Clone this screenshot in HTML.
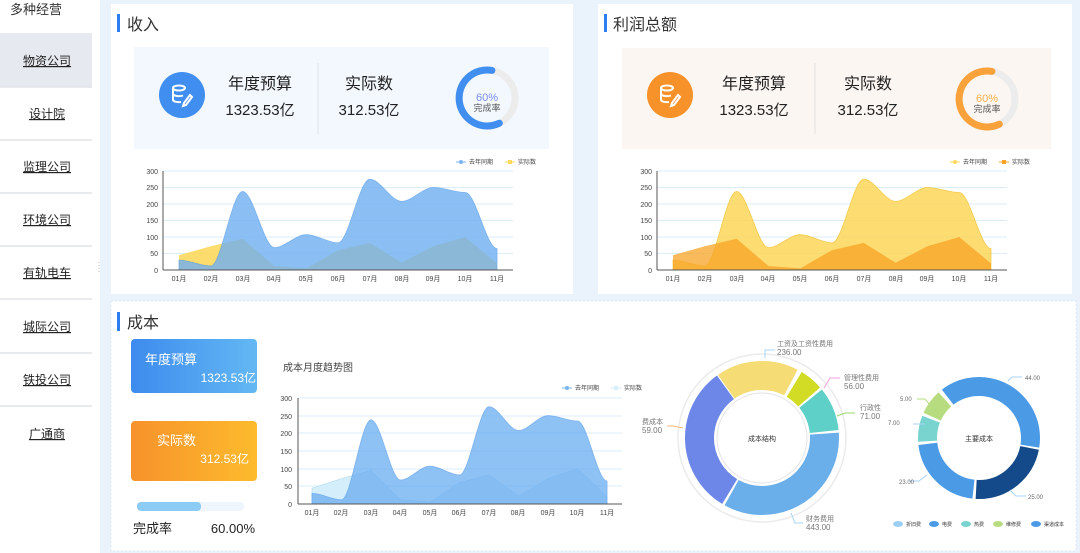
<!DOCTYPE html>
<html><head><meta charset="utf-8">
<style>
body{margin:0;width:1080px;height:553px;overflow:hidden;background:#eaf2fb;font-family:"Liberation Sans","Noto Sans CJK SC",sans-serif;}
svg text{font-family:"Liberation Sans","Noto Sans CJK SC",sans-serif;}
</style></head><body>
<svg width="1080" height="553" viewBox="0 0 1080 553" xmlns="http://www.w3.org/2000/svg" style="position:absolute;left:0;top:0">
<!-- sidebar -->
<rect x="0" y="0" width="100" height="553" fill="#fff"/>
<text x="10" y="14" font-size="13" fill="#333">多种经营</text>
<rect x="0" y="33" width="92" height="54" fill="#e6e9ef"/>
<g stroke="#e2e4e8" stroke-width="1.5">
<line x1="0" y1="87" x2="92" y2="87"/><line x1="0" y1="140" x2="92" y2="140"/><line x1="0" y1="193" x2="92" y2="193"/><line x1="0" y1="246" x2="92" y2="246"/><line x1="0" y1="299" x2="92" y2="299"/><line x1="0" y1="353" x2="92" y2="353"/><line x1="0" y1="406" x2="92" y2="406"/>
</g>
<g font-size="12" fill="#222" text-anchor="middle" text-decoration="underline">
<text x="47" y="65">物资公司</text><text x="47" y="118">设计院</text><text x="47" y="171">监理公司</text><text x="47" y="224">环境公司</text><text x="47" y="277">有轨电车</text><text x="47" y="331">城际公司</text><text x="47" y="384">铁投公司</text><text x="47" y="438">广通商</text>
</g>
<line x1="99" y1="262" x2="99" y2="274" stroke="#bbb" stroke-dasharray="1 2"/>

<!-- panels -->
<rect x="111" y="4" width="462" height="290" fill="#fff"/>
<rect x="598" y="4" width="474" height="290" fill="#fff"/>
<rect x="111" y="301" width="965" height="250" fill="#fff" stroke="#dde9f5" stroke-dasharray="2 2"/>

<!-- revenue -->
<rect x="117" y="14" width="3" height="18" fill="#2d7cf0"/>
<text x="127" y="30" font-size="16" fill="#333">收入</text>
<rect x="134" y="47" width="415" height="102" fill="#f3f8fe"/>
<circle cx="182" cy="95" r="23" fill="#3f8ef0"/>
<g fill="none" stroke="#fff" stroke-width="2"><ellipse cx="179" cy="88" rx="6" ry="2.5"/><path d="M173,88 v12 a6,2.5 0 0 0 8,2 M173,94 a6,2.5 0 0 0 10,1.5"/><path d="M184,103 l6,-8 l2,2 l-6,8 l-3,1z"/></g>
<g text-anchor="middle" fill="#222"><text x="260" y="89" font-size="16">年度预算</text><text x="260" y="115" font-size="15">1323.53亿</text><text x="369" y="89" font-size="16">实际数</text><text x="369" y="115" font-size="15">312.53亿</text></g>
<line x1="318" y1="63" x2="318" y2="134" stroke="#dde3ea"/>
<circle cx="487" cy="98" r="28" fill="none" stroke="#ececec" stroke-width="7"/>
<path d="M491.9,70.4 A28,28 0 1 0 499.3,123.2" fill="none" stroke="#3f8ef0" stroke-width="7" stroke-linecap="round"/>
<text x="487" y="101" font-size="11" fill="#7a8ef0" text-anchor="middle">60%</text>
<text x="487" y="111" font-size="9" fill="#555" text-anchor="middle">完成率</text>

<!-- chart1 -->
<g stroke="#dbeef8"><line x1="163" y1="171" x2="513" y2="171"/><line x1="163" y1="187.5" x2="513" y2="187.5"/><line x1="163" y1="204" x2="513" y2="204"/><line x1="163" y1="220.5" x2="513" y2="220.5"/><line x1="163" y1="237" x2="513" y2="237"/><line x1="163" y1="253.5" x2="513" y2="253.5"/></g>
<g font-size="7" fill="#444" text-anchor="end"><text x="158" y="174">300</text><text x="158" y="190">250</text><text x="158" y="207">200</text><text x="158" y="223">150</text><text x="158" y="240">100</text><text x="158" y="256">50</text><text x="158" y="273">0</text></g>
<path d="M179,255.2 L210.8,246.2 L242.6,238.7 L274.4,266 L306.2,268.4 L338,250.2 L369.8,242.9 L401.6,262.7 L433.4,246.2 L465.2,237 L497,263.4 L497,270 L179,270Z" fill="#fcd85c" opacity="0.9"/>
<path d="M179,260.1 C189.6,260.1 200.2,266 210.8,266 C221.4,266 232,191.5 242.6,191.5 C253.2,191.5 263.8,247.6 274.4,247.6 C285,247.6 295.6,234.7 306.2,234.7 C316.8,234.7 327.4,242.9 338,242.9 C348.6,242.9 359.2,179.3 369.8,179.3 C380.4,179.3 391,201.4 401.6,201.4 C412.2,201.4 422.8,187.5 433.4,187.5 C444,187.5 454.6,192.5 465.2,192.5 C475.8,192.5 486.4,248.6 497,248.6 L497,270 L179,270 Z" fill="#6fb0f2" opacity="0.8" stroke="#5a9eea" stroke-width="0.8"/>
<line x1="163" y1="171" x2="163" y2="270" stroke="#555"/><line x1="163" y1="270" x2="513" y2="270" stroke="#555"/>
<g font-size="7" fill="#444" text-anchor="middle"><text x="179" y="281">01月</text><text x="211" y="281">02月</text><text x="243" y="281">03月</text><text x="274" y="281">04月</text><text x="306" y="281">05月</text><text x="338" y="281">06月</text><text x="370" y="281">07月</text><text x="402" y="281">08月</text><text x="433" y="281">09月</text><text x="465" y="281">10月</text><text x="497" y="281">11月</text></g>
<g font-size="6" fill="#444"><line x1="456" y1="162" x2="466" y2="162" stroke="#7ab5f0"/><circle cx="461" cy="162" r="2" fill="#7ab5f0"/><text x="469" y="164">去年同期</text><line x1="505" y1="162" x2="515" y2="162" stroke="#fcd85c"/><rect x="508" y="160" width="4" height="4" fill="#fcd85c"/><text x="518" y="164">实际数</text></g>

<!-- profit -->
<rect x="604" y="14" width="3" height="18" fill="#2d7cf0"/>
<text x="613" y="30" font-size="16" fill="#333">利润总额</text>
<rect x="622" y="48" width="429" height="101" fill="#fbf6f2"/>
<circle cx="670" cy="95" r="23" fill="#f7922a"/>
<g fill="none" stroke="#fff" stroke-width="2"><ellipse cx="667" cy="88" rx="6" ry="2.5"/><path d="M661,88 v12 a6,2.5 0 0 0 8,2 M661,94 a6,2.5 0 0 0 10,1.5"/><path d="M672,103 l6,-8 l2,2 l-6,8 l-3,1z"/></g>
<g text-anchor="middle" fill="#222"><text x="754" y="89" font-size="16">年度预算</text><text x="754" y="115" font-size="15">1323.53亿</text><text x="868" y="89" font-size="16">实际数</text><text x="868" y="115" font-size="15">312.53亿</text></g>
<line x1="815" y1="63" x2="815" y2="134" stroke="#e3e3e3"/>
<circle cx="987" cy="99" r="28" fill="none" stroke="#ececec" stroke-width="7"/>
<path d="M991.9,71.4 A28,28 0 1 0 999.3,124.2" fill="none" stroke="#f9a23b" stroke-width="7" stroke-linecap="round"/>
<text x="987" y="102" font-size="11" fill="#f9b04d" text-anchor="middle">60%</text>
<text x="987" y="112" font-size="9" fill="#555" text-anchor="middle">完成率</text>
<g transform="translate(494,0)">
<g stroke="#dbeef8"><line x1="163" y1="171" x2="513" y2="171"/><line x1="163" y1="187.5" x2="513" y2="187.5"/><line x1="163" y1="204" x2="513" y2="204"/><line x1="163" y1="220.5" x2="513" y2="220.5"/><line x1="163" y1="237" x2="513" y2="237"/><line x1="163" y1="253.5" x2="513" y2="253.5"/></g>
<g font-size="7" fill="#444" text-anchor="end"><text x="158" y="174">300</text><text x="158" y="190">250</text><text x="158" y="207">200</text><text x="158" y="223">150</text><text x="158" y="240">100</text><text x="158" y="256">50</text><text x="158" y="273">0</text></g>
<path d="M179,260.1 C189.6,260.1 200.2,266 210.8,266 C221.4,266 232,191.5 242.6,191.5 C253.2,191.5 263.8,247.6 274.4,247.6 C285,247.6 295.6,234.7 306.2,234.7 C316.8,234.7 327.4,242.9 338,242.9 C348.6,242.9 359.2,179.3 369.8,179.3 C380.4,179.3 391,201.4 401.6,201.4 C412.2,201.4 422.8,187.5 433.4,187.5 C444,187.5 454.6,192.5 465.2,192.5 C475.8,192.5 486.4,248.6 497,248.6 L497,270 L179,270 Z" fill="#fdd65a" opacity="0.85" stroke="#f2c230" stroke-width="0.8"/>
<path d="M179,255.2 L210.8,246.2 L242.6,238.7 L274.4,266 L306.2,268.4 L338,250.2 L369.8,242.9 L401.6,262.7 L433.4,246.2 L465.2,237 L497,263.4 L497,270 L179,270Z" fill="#f7a326" opacity="0.75"/>
<line x1="163" y1="171" x2="163" y2="270" stroke="#555"/><line x1="163" y1="270" x2="513" y2="270" stroke="#555"/>
<g font-size="7" fill="#444" text-anchor="middle"><text x="179" y="281">01月</text><text x="211" y="281">02月</text><text x="243" y="281">03月</text><text x="274" y="281">04月</text><text x="306" y="281">05月</text><text x="338" y="281">06月</text><text x="370" y="281">07月</text><text x="402" y="281">08月</text><text x="433" y="281">09月</text><text x="465" y="281">10月</text><text x="497" y="281">11月</text></g>
<g font-size="6" fill="#444"><line x1="456" y1="162" x2="466" y2="162" stroke="#fcd85c"/><circle cx="461" cy="162" r="2" fill="#fcd85c"/><text x="469" y="164">去年同期</text><line x1="505" y1="162" x2="515" y2="162" stroke="#f7a326"/><rect x="508" y="160" width="4" height="4" fill="#f7a326"/><text x="518" y="164">实际数</text></g>
</g>

<!-- cost -->
<rect x="117" y="312" width="3" height="19" fill="#2d7cf0"/>
<text x="127" y="328" font-size="16" fill="#333">成本</text>
<defs>
<linearGradient id="gb" x1="0" x2="1"><stop offset="0" stop-color="#3d8bee"/><stop offset="1" stop-color="#63b8f3"/></linearGradient>
<linearGradient id="go" x1="0" x2="1"><stop offset="0" stop-color="#f7922c"/><stop offset="1" stop-color="#fdbb2d"/></linearGradient>
</defs>
<rect x="131" y="339" width="126" height="54" rx="4" fill="url(#gb)"/>
<text x="145" y="364" font-size="13" fill="#fff">年度预算</text>
<text x="256" y="382" font-size="12" fill="#fff" text-anchor="end">1323.53亿</text>
<rect x="131" y="421" width="126" height="60" rx="4" fill="url(#go)"/>
<text x="157" y="445" font-size="13" fill="#fff">实际数</text>
<text x="249" y="463" font-size="12" fill="#fff" text-anchor="end">312.53亿</text>
<rect x="137" y="502" width="107" height="9" rx="4" fill="#eef5fd"/>
<rect x="137" y="502" width="64" height="9" rx="4" fill="#8ccbf3"/>
<text x="133" y="533" font-size="13" fill="#222">完成率</text>
<text x="255" y="533" font-size="13" fill="#222" text-anchor="end">60.00%</text>
<text x="283" y="371" font-size="10" fill="#444">成本月度趋势图</text>
<g stroke="#dbeef8"><line x1="298" y1="398" x2="622" y2="398"/><line x1="298" y1="416" x2="622" y2="416"/><line x1="298" y1="433" x2="622" y2="433"/><line x1="298" y1="451" x2="622" y2="451"/><line x1="298" y1="469" x2="622" y2="469"/><line x1="298" y1="486" x2="622" y2="486"/></g>
<g font-size="7" fill="#444" text-anchor="end"><text x="292" y="401">300</text><text x="292" y="419">250</text><text x="292" y="436">200</text><text x="292" y="454">150</text><text x="292" y="472">100</text><text x="292" y="489">50</text><text x="292" y="507">0</text></g>
<path d="M312,488.1 L341.5,478.6 L371,470.4 L400.5,499.8 L430,502.2 L459.5,482.8 L489,475 L518.5,496.2 L548,478.6 L577.5,468.7 L607,496.9 L607,504 L312,504Z" fill="#d5eefb" stroke="#a9d8f3" stroke-width="0.6"/>
<path d="M312,493.4 C321.8,493.4 331.7,499.8 341.5,499.8 C351.3,499.8 361.2,419.9 371,419.9 C380.8,419.9 390.7,480 400.5,480 C410.3,480 420.2,466.2 430,466.2 C439.8,466.2 449.7,475 459.5,475 C469.3,475 479.2,406.8 489,406.8 C498.8,406.8 508.7,430.5 518.5,430.5 C528.3,430.5 538.2,415.7 548,415.7 C557.8,415.7 567.7,421 577.5,421 C587.3,421 597.2,481 607,481 L607,504 L312,504Z" fill="#6fb0f2" opacity="0.78" stroke="#5a9eea" stroke-width="0.8"/>
<line x1="298" y1="398" x2="298" y2="504" stroke="#555"/><line x1="298" y1="504" x2="622" y2="504" stroke="#555"/>
<g font-size="7" fill="#444" text-anchor="middle"><text x="312" y="515">01月</text><text x="341" y="515">02月</text><text x="371" y="515">03月</text><text x="400" y="515">04月</text><text x="430" y="515">05月</text><text x="459" y="515">06月</text><text x="489" y="515">07月</text><text x="518" y="515">08月</text><text x="548" y="515">09月</text><text x="577" y="515">10月</text><text x="607" y="515">11月</text></g>
<g font-size="6" fill="#444"><line x1="562" y1="388" x2="572" y2="388" stroke="#7ab5f0"/><circle cx="567" cy="388" r="2" fill="#7ab5f0"/><text x="575" y="390">去年同期</text><line x1="611" y1="388" x2="621" y2="388" stroke="#d5eefb"/><rect x="614" y="386" width="4" height="4" fill="#d5eefb"/><text x="624" y="390">实际数</text></g>

<!-- big donut -->
<circle cx="762" cy="438" r="84" fill="none" stroke="#ebebeb" stroke-width="1.5"/>
<circle cx="762" cy="438" r="45" fill="none" stroke="#e4e4e4" stroke-width="1"/>
<g transform="rotate(-90 762 438)" fill="none" stroke-width="29">
<circle cx="762" cy="438" r="62.5" stroke="#f5dc74" stroke-dasharray="68.7 400" stroke-dashoffset="-354.5"/>
<circle cx="762" cy="438" r="62.5" stroke="#f5dc74" stroke-dasharray="30 400" stroke-dashoffset="0"/>
<circle cx="762" cy="438" r="62.5" stroke="#d2dc24" stroke-dasharray="19.6 400" stroke-dashoffset="-33.8"/>
<circle cx="762" cy="438" r="62.5" stroke="#5fd0c8" stroke-dasharray="36 400" stroke-dashoffset="-55.6"/>
<circle cx="762" cy="438" r="62.5" stroke="#6aaeea" stroke-dasharray="134.2 400" stroke-dashoffset="-93.8"/>
<circle cx="762" cy="438" r="62.5" stroke="#6d87e8" stroke-dasharray="123.3 400" stroke-dashoffset="-230.2"/>
</g>
<text x="762" y="441" font-size="7" fill="#333" text-anchor="middle">成本结构</text>
<g font-size="7" fill="#777">
<path d="M765,358 v-8 h10" stroke="#a8d4f5" fill="none"/><text x="777" y="346">工资及工资性费用</text><text x="777" y="355" font-size="8">236.00</text>
<path d="M824,388 l6,-10 h10" stroke="#f0a0e0" fill="none"/><text x="844" y="380">管理性费用</text><text x="844" y="389" font-size="8">56.00</text>
<path d="M837,416 l8,-3 h10" stroke="#9ad86a" fill="none"/><text x="860" y="410">行政性</text><text x="860" y="419" font-size="8">71.00</text>
<path d="M683,428 l-10,-2 h-6" stroke="#f5b87a" fill="none"/><text x="642" y="424">费成本</text><text x="642" y="433" font-size="8">59.00</text>
<path d="M791,513 l4,10 h8" stroke="#a8d4f5" fill="none"/><text x="806" y="521">财务费用</text><text x="806" y="530" font-size="8">443.00</text>
</g>

<!-- small donut -->
<g transform="rotate(-90 979 438)" fill="none" stroke-width="19">
<circle cx="979" cy="438" r="51.5" stroke="#4a9ae6" stroke-dasharray="122.3 400" stroke-dashoffset="-289.5"/>
<circle cx="979" cy="438" r="51.5" stroke="#4a9ae6" stroke-dasharray="89 400" stroke-dashoffset="0"/>
<circle cx="979" cy="438" r="51.5" stroke="#144a8a" stroke-dasharray="73.7 400" stroke-dashoffset="-90.8"/>
<circle cx="979" cy="438" r="51.5" stroke="#4a9ae6" stroke-dasharray="69.2 400" stroke-dashoffset="-167.2"/>
<circle cx="979" cy="438" r="51.5" stroke="#79d3cf" stroke-dasharray="22.5 400" stroke-dashoffset="-239.1"/>
<circle cx="979" cy="438" r="51.5" stroke="#b7dc7f" stroke-dasharray="21.6 400" stroke-dashoffset="-264.3"/>
</g>
<text x="979" y="441" font-size="7" fill="#333" text-anchor="middle">主要成本</text>
<g font-size="6" fill="#555" fill-opacity="0.9">
<path d="M1008,381 l4,-4 h10" stroke="#a8d4f5" fill="none"/><text x="1025" y="380">44.00</text>
<path d="M930,405 l-5,-6 h-8" stroke="#b7dc7f" fill="none"/><text x="900" y="401">5.00</text>
<path d="M925,424 h-12" stroke="#a8d4f5" fill="none"/><text x="888" y="425">7.00</text>
<path d="M927,475 l-8,6 h-10" stroke="#a8d4f5" fill="none"/><text x="899" y="484">23.00</text>
<path d="M1010,490 l6,6 h10" stroke="#a8d4f5" fill="none"/><text x="1028" y="499">25.00</text>
</g>
<g font-size="5" fill="#333">
<ellipse cx="898" cy="524" rx="5" ry="3" fill="#9ccff5"/><text x="906" y="526">折旧费</text>
<ellipse cx="934" cy="524" rx="5" ry="3" fill="#4a9ae6"/><text x="942" y="526">电费</text>
<ellipse cx="966" cy="524" rx="5" ry="3" fill="#79d3cf"/><text x="974" y="526">热费</text>
<ellipse cx="998" cy="524" rx="5" ry="3" fill="#b7dc7f"/><text x="1006" y="526">维修费</text>
<ellipse cx="1036" cy="524" rx="5" ry="3" fill="#4a9ae6"/><text x="1044" y="526">渠道成本</text>
</g>
</svg>
</body></html>
